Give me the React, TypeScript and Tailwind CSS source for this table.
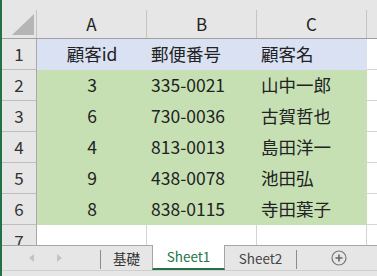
import React from 'react';

type Row = { id: string; zip: string; name: string };

const rows: Row[] = [
  { id: '3', zip: '335-0021', name: '山中一郎' },
  { id: '6', zip: '730-0036', name: '古賀哲也' },
  { id: '4', zip: '813-0013', name: '島田洋一' },
  { id: '9', zip: '438-0078', name: '池田弘' },
  { id: '8', zip: '838-0115', name: '寺田葉子' },
];

const font = { fontFamily: '"Noto Sans CJK JP", "Noto Sans", sans-serif' };

const ColHeader: React.FC<{ label?: string; className: string }> = ({ label, className }) => (
  <div className={`flex flex-col ${className}`}>
    <div className="h-[10px]" />
    <div className="flex-1 flex items-center justify-center border-r border-[#c4c4c4] text-[17px] text-[#222]">
      {label}
    </div>
  </div>
);

const RowHeader: React.FC<{ n: number; h?: string }> = ({ n, h = 'h-[31px]' }) => (
  <div className={`w-[35px] ${h} shrink-0 flex items-center justify-center border-r border-b border-r-[#a8a8a8] border-b-[#bdbdbd] bg-[#e6e6e6] text-[17px] text-[#333]`}>
    {n}
  </div>
);

const App: React.FC = () => {
  return (
    <div className="w-[377px] h-[276px] flex overflow-hidden bg-white select-none" style={font}>
      <div className="w-[2px] shrink-0 bg-[#217346]" />
      <div className="flex-1 flex flex-col">
        {/* grid */}
        <div className="h-[245px] flex flex-col overflow-hidden">
          <div className="h-[39px] shrink-0 flex bg-[#e6e6e6] border-b border-[#a0a0a0]">
            <div className="w-[35px] flex flex-col">
              <div className="h-[10px]" />
              <div className="flex-1 border-r border-[#c4c4c4] relative">
                <svg width="23" height="22" viewBox="0 0 23 22" className="absolute left-[10px] top-[4px]">
                  <polygon points="22,0 22,21 0,21" fill="#b5b5b5" />
                </svg>
              </div>
            </div>
            <ColHeader label="A" className="w-[110px]" />
            <ColHeader label="B" className="w-[110px]" />
            <ColHeader label="C" className="w-[110px]" />
            <div className="flex-1" />
          </div>

          <div className="flex">
            <RowHeader n={1} />
            <div className="w-[330px] h-[31px] flex items-center bg-[#d9e1f2] text-[17.5px] text-[#222]">
              <div className="w-[110px] text-center">顧客id</div>
              <div className="w-[110px] pl-[4px]">郵便番号</div>
              <div className="w-[110px] pl-[4px]">顧客名</div>
            </div>
            <div className="flex-1 border-b border-[#d4d4d4]" />
          </div>

          {rows.map((r, i) => (
            <div key={i} className="flex">
              <RowHeader n={i + 2} />
              <div className="w-[330px] h-[31px] flex items-center bg-[#c6e0b4] text-[17.5px] text-[#222]">
                <div className="w-[110px] text-center">{r.id}</div>
                <div className="w-[110px] pl-[4px]">{r.zip}</div>
                <div className="w-[110px] pl-[4px]">{r.name}</div>
              </div>
              <div className="flex-1 border-b border-[#d4d4d4]" />
            </div>
          ))}

          <div className="flex flex-1">
            <div className="w-[35px] shrink-0 flex justify-center pt-[3px] border-r border-[#a8a8a8] bg-[#e6e6e6] text-[17px] text-[#333]">
              7
            </div>
            <div className="w-[110px] border-r border-[#d4d4d4]" />
            <div className="w-[110px] border-r border-[#d4d4d4]" />
            <div className="w-[110px] border-r border-[#d4d4d4]" />
            <div className="flex-1" />
          </div>
        </div>

        {/* sheet tabs */}
        <div className="h-[25px] shrink-0 flex bg-[#e6e6e6] text-[13.5px]">
          <div className="w-[99px] flex items-center border-t border-[#a6a6a6]">
            <svg width="6" height="8" viewBox="0 0 6 8" className="ml-[27px]">
              <polygon points="5,0 5,8 0,4" fill="#c3c3c3" />
            </svg>
            <svg width="6" height="8" viewBox="0 0 6 8" className="ml-[22px]">
              <polygon points="0,0 0,8 5,4" fill="#c3c3c3" />
            </svg>
            <div className="ml-auto w-px h-[19px] mt-[3px] bg-[#8c8c8c]" />
          </div>
          <div className="w-[51px] flex items-center justify-center border-t border-[#a6a6a6] text-[#333]">
            基礎
          </div>
          <div className="w-[73px] flex items-center justify-center bg-white border-x border-[#a6a6a6] border-b-2 border-b-[#217346] text-[#217346]">
            Sheet1
          </div>
          <div className="w-[72px] flex items-center border-t border-[#a6a6a6] text-[#444]">
            <span className="flex-1 text-center">Sheet2</span>
            <div className="w-px h-[19px] mt-[2px] bg-[#8c8c8c]" />
          </div>
          <div className="flex-1 flex items-center border-t border-[#a6a6a6]">
            <svg width="16" height="16" viewBox="0 0 16 16" className="ml-[34px]">
              <circle cx="8" cy="8" r="7" fill="none" stroke="#777" strokeWidth="1.2" />
              <path d="M8 4.5v7M4.5 8h7" stroke="#666" strokeWidth="1.6" />
            </svg>
          </div>
        </div>
        <div className="flex-1 bg-[#e6e6e6] border-t border-[#cfcfcf]" />
      </div>
    </div>
  );
};

export default App;
